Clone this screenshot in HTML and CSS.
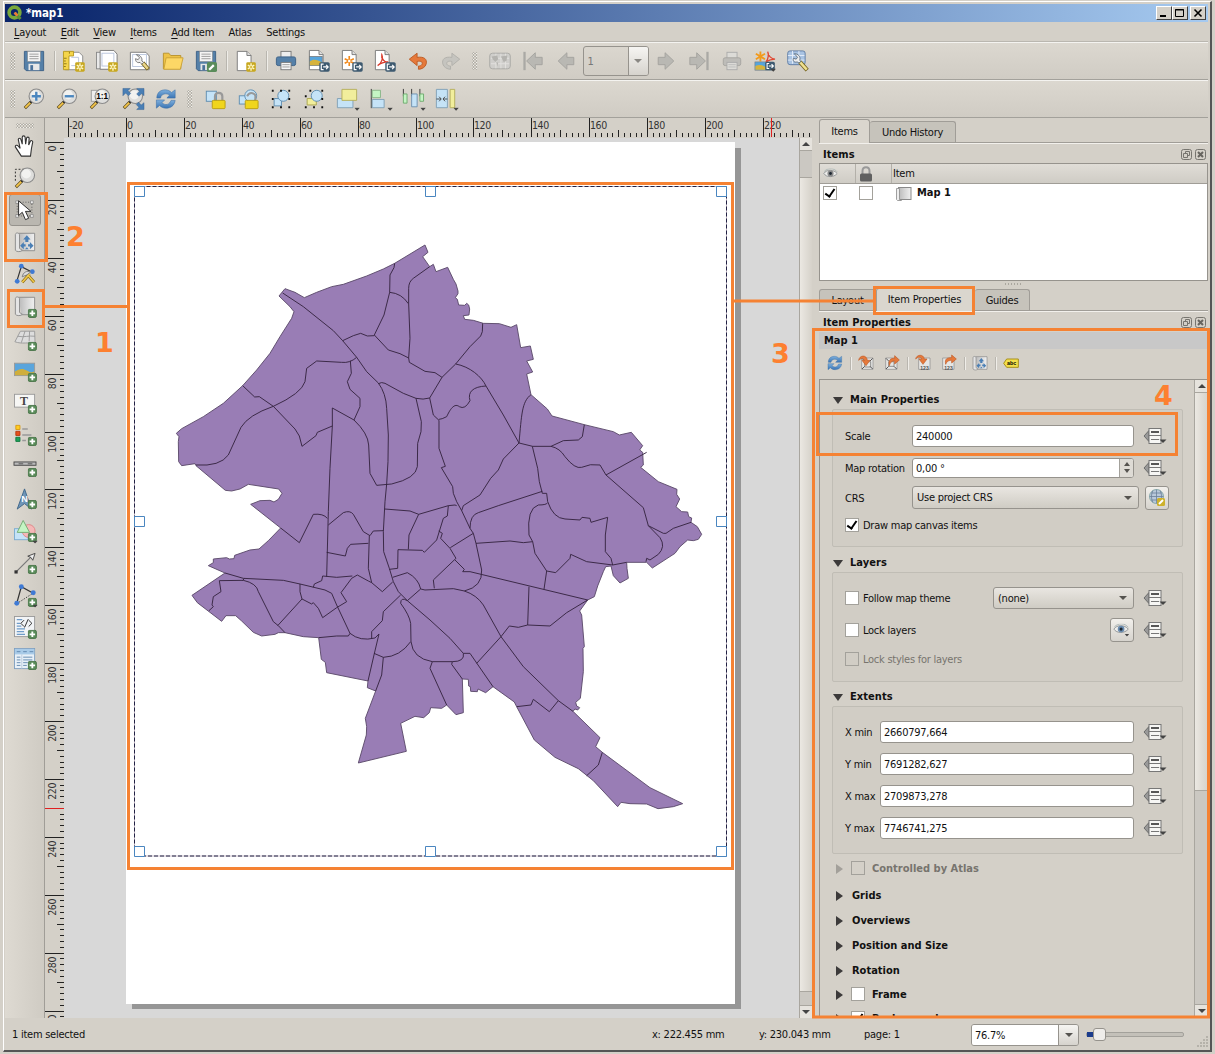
FILE: index.html
```html
<!DOCTYPE html>
<html lang="en">
<head>
<meta charset="utf-8">
<title>*map1</title>
<link rel="stylesheet" href="styles.css">
</head>
<body>
<svg class="defs" width="0" height="0">
  <defs>
    <linearGradient id="gPaper" x1="0" x2="1"><stop offset="0" stop-color="#b9b9b9"/><stop offset=".5" stop-color="#d6d6d6"/><stop offset="1" stop-color="#f0f0f0"/></linearGradient>
    <linearGradient id="gBlue" x1="0" y1="0" x2="0" y2="1"><stop offset="0" stop-color="#7fb0dd"/><stop offset="1" stop-color="#3a74b4"/></linearGradient>
    <symbol id="plus" viewBox="0 0 10 10"><rect x=".5" y=".5" width="9" height="9" rx="1.8" fill="#5a8c5a" stroke="#477347"/><path d="M5 2v6M2 5h6" stroke="#fff" stroke-width="2"/></symbol>
    <symbol id="star" viewBox="0 0 11 11"><rect x=".3" y=".3" width="10.4" height="10.4" rx="1.5" fill="#c8a820"/><path d="M5.5 1.5v8M2 3.5l7 4M9 3.5l-7 4" stroke="#fff8c8" stroke-width="1.5"/><circle cx="5.5" cy="5.5" r="1" fill="#c8a820"/></symbol>
    <symbol id="export" viewBox="0 0 12 11"><rect x=".3" y=".3" width="11.4" height="10.4" rx="1.8" fill="#3e5a70"/><path d="M5 2.5H2.5v6H5M4.5 5.5H10M7.8 3.2L10 5.5 7.8 7.8" fill="none" stroke="#fff" stroke-width="1.3"/></symbol>
    <symbol id="lens" viewBox="0 0 24 24"><path d="M8.5 15.5L2 22" stroke="#5a4a20" stroke-width="3.4"/><path d="M8 16l-5.5 5.5" stroke="#f5c64a" stroke-width="2"/><path d="M10 14l-2 2" stroke="#222" stroke-width="2.6"/><circle cx="14.5" cy="9" r="7.900" fill="#dededc" stroke="#8b8b8b" stroke-width="1.2"/><circle cx="13.500" cy="7.500" r="5" fill="#f2f2f0"/></symbol>
    <symbol id="sheet" viewBox="0 0 24 24"><path d="M4.500 1.500h10.500l4.500 4.500v16.500h-15z" fill="#fff" stroke="#777"/><path d="M15 1.500v4.500h4.500" fill="#ddd" stroke="#777"/></symbol>
    <symbol id="refresh" viewBox="0 0 24 24"><path d="M2 11C2 5 6 2 11 2c3 0 5 1 7 3l4-3v9h-9l3-3.500C12 5.500 7 6 6 11z" fill="url(#gBlue)" stroke="#3a6ea5" stroke-width=".6"/><path d="M22 13.500c-1 6-5 8.500-10 8.500-3 0-5-1-7-3l-3.500 3v-9h9l-3 3c4 3.500 8 2.500 10-2.500z" fill="url(#gBlue)" stroke="#3a6ea5" stroke-width=".6"/></symbol>
    <symbol id="disk" viewBox="0 0 24 24"><path d="M1.500 1.500h21v21h-19l-2-2z" fill="#5580a8" stroke="#3b5f85"/><rect x="5" y="1.500" width="14" height="11" fill="#f4f4f4" stroke="#888" stroke-width=".6"/><path d="M7 4.500h10M7 7h10M7 9.500h10" stroke="#999"/><rect x="6" y="15" width="12" height="7" fill="#e8e8e8"/><rect x="8" y="16.500" width="3" height="5.500" fill="#4b729b"/></symbol>
    <symbol id="eye" viewBox="0 0 18 12"><path d="M1 6C4 1 13 1 17 6 13 11 4 11 1 6z" fill="#eeeeec" stroke="#8b8f92"/><circle cx="9" cy="6" r="3.700" fill="var(--iris,#6a8cb0)"/><circle cx="9" cy="6" r="1.700" fill="#1d2732"/><path d="M1.500 3.500C6-1 13-1 17 4" fill="none" stroke="#9aa" stroke-width=".8"/></symbol>
    <symbol id="drop" viewBox="0 0 6 4"><path d="M0 .5h6L3 3.700z" fill="#444"/></symbol>
    <symbol id="override" viewBox="0 0 24 18"><path d="M6 3.500L1 9l5 5.500z" fill="#999" stroke="#6d6d6d"/><rect x="6" y="1.500" width="12" height="15" fill="#f6f6f4" stroke="#777"/><path d="M8 5h8" stroke="#444" stroke-width="1.800"/><path d="M6 8.500h12M8 12.500h8" stroke="#777"/><path d="M16.500 12.500h7L20 16z" fill="#444"/></symbol>
    <symbol id="roll" viewBox="0 0 24 24"><path d="M5 2.500h17.500v19H8" fill="url(#gPaper)" stroke="#8a8a8a"/><path d="M1.500 4c0-2.500 4-2.500 4.500 0v15l3 2c-1 2-6.500 2-7.500 0z" fill="#e4e4e4" stroke="#8a8a8a"/></symbol>
    <symbol id="arrow" viewBox="0 0 24 24"><path d="M3.500 12L13 3v5h7.500v8H13v5z" fill="#b9b8b3" stroke="#a3a29e"/></symbol>
    <symbol id="fourway" viewBox="0 0 24 24"><path d="M12 1l6 7h-3.500v4h-5V8H6zM1 18l6-6v3.500l3 0v4H7V24zM23 18l-6-6v3.500l-3 0v4h3V24zM9 24l3-3.500 3 3.500z" fill="#4a7fb5"/></symbol>
    <symbol id="restore" viewBox="0 0 11 11"><rect x=".5" y=".5" width="10" height="10" rx="2" fill="none" stroke="#77756f"/><path d="M4.500 4.500v-2h4v4h-2M2.500 4.500h4v4h-4z" fill="none" stroke="#77756f"/></symbol>
    <symbol id="close" viewBox="0 0 11 11"><rect x=".5" y=".5" width="10" height="10" rx="2" fill="none" stroke="#77756f"/><path d="M3 3l5 5M8 3l-5 5" stroke="#66645f" stroke-width="2"/></symbol>
  </defs>
</svg>

<div class="window">
  <header class="titlebar">
    <svg class="logo" viewBox="0 0 16 16"><circle cx="7.500" cy="7.500" r="5.400" fill="none" stroke="#79a83c" stroke-width="3.600"/><path d="M8 8l5.500 6" stroke="#5f9136" stroke-width="3"/><path d="M7.500 7.500l3 3.200" stroke="#ee7a3a" stroke-width="2.500"/></svg>
    <span class="title">*map1</span>
    <div class="winbtns">
      <b><svg viewBox="0 0 14 12"><path d="M3 9h6" stroke="#000" stroke-width="2"/></svg></b><b><svg viewBox="0 0 14 12"><path d="M2.500 2.500h8v7h-8zM2 3h9" fill="none" stroke="#000"/></svg></b><b class="gap"><svg viewBox="0 0 14 12"><path d="M3.500 2.500l7 7M10.500 2.500l-7 7" stroke="#000" stroke-width="1.600"/></svg></b>
    </div>
  </header>
  <nav class="menu">
    <span><u>L</u>ayout</span><span><u>E</u>dit</span><span><u>V</u>iew</span><span><u>I</u>tems</span><span><u>A</u>dd Item</span><span>Atlas</span><span>Settings</span>
  </nav>

  <div class="toolbar">
    <i class="grip"></i>
    <svg class="ic" viewBox="0 0 24 24"><use href="#disk"/></svg>
    <i class="sep"></i>
    <svg class="ic" viewBox="0 0 24 24"><path d="M2.500 2.500h15l4 4v15h-19z" fill="#fff" stroke="#888"/><path d="M9 8h8v9H9" fill="none" stroke="#b8c4dc"/><path d="M.5 1.500h11v5h-5v15h-6z" fill="#f5d54a" stroke="#b8981c"/><path d="M1 9h3M1 12h2M1 15h3M1 18h2M7 2v2" stroke="#8b7418"/><use href="#star" x="13" y="13" width="11" height="11"/></svg>
    <svg class="ic" viewBox="0 0 24 24"><rect x=".5" y="2.500" width="16" height="18" fill="#e9e9e9" stroke="#888"/><path d="M4.500.5h15l3.500 4v16.500H4.500z" fill="#fff" stroke="#777"/><rect x="6.500" y="3.500" width="13" height="14" fill="none" stroke="#b8c4dc"/><use href="#star" x="13" y="13" width="11" height="11"/></svg>
    <svg class="ic" viewBox="0 0 24 24"><path d="M1.500 2.500h17l3.500 4v15H1.500z" fill="#fff" stroke="#777"/><rect x="4" y="5" width="15" height="13" fill="none" stroke="#b8c4dc"/><path d="M15 14l6 7" stroke="#6f5c16" stroke-width="4.500"/><path d="M15 14l5.500 6.500" stroke="#ead68a" stroke-width="2.800"/><path d="M8 5c4 0 7 4 6 7l2 1.500-2 2-2-2c-3 1-5-1-5-4l3 1 1.500-2z" fill="#eee" stroke="#666" stroke-width=".9"/></svg>
    <svg class="ic" viewBox="0 0 24 24"><path d="M1.500 20.500v-17h6l2 2.500h11v14.500z" fill="#eec246" stroke="#b8922c"/><path d="M4.500 8.500h18.500l-3 12.500H2z" fill="#fcd766" stroke="#c9a136"/></svg>
    <svg class="ic" viewBox="0 0 24 24"><use href="#disk"/><rect x="13" y="13" width="11" height="11" rx="2" fill="#5a8c5a"/><path d="M15.500 21.500l5-5" stroke="#fff" stroke-width="2.500"/></svg>
    <i class="sep"></i>
    <svg class="ic" viewBox="0 0 24 24"><use href="#sheet" x="-2"/><use href="#star" x="12" y="13" width="11" height="11"/></svg>
    <i class="sep"></i>
    <svg class="ic" viewBox="0 0 24 24"><rect x="6.500" y="1.500" width="11" height="7" fill="#eee" stroke="#777"/><rect x="1.500" y="7.500" width="21" height="9.500" rx="2" fill="#5580a8" stroke="#3b5f85"/><rect x="6.500" y="13.500" width="11" height="8" fill="#f8f8f8" stroke="#777"/><path d="M8 16h8M8 18.500h8" stroke="#999"/></svg>
    <svg class="ic" viewBox="0 0 24 24"><use href="#sheet" x="-3" y="-1"/><rect x="1.500" y="7" width="14" height="10" fill="#56a4dc" stroke="#777" stroke-width=".8"/><path d="M2 16.500v-4c4-3 8-2 13 1v3z" fill="#d6b33c"/><use href="#export" x="12" y="13" width="12" height="11"/></svg>
    <svg class="ic" viewBox="0 0 24 24"><use href="#sheet" x="-3" y="-1"/><path d="M9 6.500v11M4 9.500l10 5M14 9.500l-10 5" stroke="#f28a1c" stroke-width="1.800"/><circle cx="9" cy="12" r="1.400" fill="#fff"/><use href="#export" x="12" y="13" width="12" height="11"/></svg>
    <svg class="ic" viewBox="0 0 24 24"><use href="#sheet" x="-3" y="-1"/><path d="M4 17c5-3 6-9 4.500-12-1 4 3 9 7 8-4 0-8 1-11.500 4z" fill="none" stroke="#d93a2b" stroke-width="1.400"/><use href="#export" x="12" y="13" width="12" height="11"/></svg>
    <svg class="ic" viewBox="0 0 24 24"><path d="M2.500 10L11 3.500V8c8-1 11 2 10 7-1 4-5 6-8.500 6v-3.500c4 0 5-3 3.500-4.500-1-1-3-1-5-.5v4.500z" fill="#e5793b" stroke="#bb5a22"/></svg>
    <svg class="ic" viewBox="0 0 24 24"><path d="M21.500 10L13 3.500V8c-8-1-11 2-10 7 1 4 5 6 8.500 6v-3.500c-4 0-5-3-3.500-4.500 1-1 3-1 5-.5v4.500z" fill="#c5c4bf" stroke="#b0afaa"/></svg>
    <i class="grip mid"></i>
    <svg class="ic" viewBox="0 0 24 24"><rect x=".8" y="3.500" width="22.400" height="17" rx="3" fill="#cfcecb" stroke="#a9a8a4"/><path d="M2 9h20M2 15h20M7.500 4v16M13 4v16M18 4v16" stroke="#e2e1de"/><path d="M3 7l6-1 1 4-3 3-3-3zM13 7l7-1-1 6-3 1zM8 13l2 1-1 4z" fill="#b4b3af"/></svg>
    <svg class="ic" viewBox="0 0 24 24"><rect x="1.500" y="2" width="2.500" height="20" fill="#aaa9a5"/><use href="#arrow" x="1.500"/></svg>
    <svg class="ic" viewBox="0 0 24 24"><use href="#arrow"/></svg>
    <div class="pagebox"><span>1</span><em></em></div>
    <svg class="ic" viewBox="0 0 24 24"><use href="#arrow" transform="matrix(-1 0 0 1 24 0)"/></svg>
    <svg class="ic" viewBox="0 0 24 24"><rect x="20" y="2" width="2.500" height="20" fill="#aaa9a5"/><use href="#arrow" transform="matrix(-1 0 0 1 22.500 0)"/></svg>
    <svg class="ic" viewBox="0 0 24 24"><rect x="6.500" y="2.500" width="11" height="7" fill="#dcdbd7" stroke="#aaa"/><rect x="2.500" y="8.500" width="19" height="8.500" rx="2" fill="#bdbcb8" stroke="#a5a4a0"/><rect x="6.500" y="13.500" width="11" height="8" fill="#dcdbd7" stroke="#aaa"/><path d="M8 16h8M8 18.500h8" stroke="#bbb"/></svg>
    <svg class="ic" viewBox="0 0 24 24"><path d="M7 1.500v11M2 4l10 6M12 4L2 10" stroke="#f29a1c" stroke-width="2"/><path d="M13 13c3-3 3-9 2-11 0 4 4 8 8 8-4 0-7 1-10 3z" fill="none" stroke="#e04a35" stroke-width="1.500"/><rect x="1" y="13" width="12" height="9" fill="#56a4dc" stroke="#777" stroke-width=".6"/><path d="M1.500 21.500v-4c4-2 8-1 11 1v3z" fill="#d6b33c"/><use href="#export" x="12" y="12" width="11" height="11"/><use href="#drop" x="18" y="20" width="6" height="4"/></svg>
    <svg class="ic" viewBox="0 0 24 24"><rect x=".8" y="1" width="19" height="15" rx="2.500" fill="#a9c3e2" stroke="#5d7ba3"/><path d="M1 6h18M1 11h18M6 1v14M13 1v14" stroke="#e6eef8"/><path d="M14 13l8 9" stroke="#6f5c16" stroke-width="4.500"/><path d="M14 13l7.500 8.500" stroke="#efe08e" stroke-width="2.800"/><path d="M8 4c4 0 7 3 6 7l1 2-2 1-2-1c-3 1-5-1-4-4l3 1 1.500-2z" fill="#eee" stroke="#567" stroke-width=".9"/></svg>
  </div>

  <div class="toolbar second">
    <i class="grip"></i>
    <svg class="ic" viewBox="0 0 24 24"><use href="#lens"/><path d="M14.500 4v10M9.500 9h10" stroke="#4a86bf" stroke-width="2.600"/></svg>
    <svg class="ic" viewBox="0 0 24 24"><use href="#lens"/><path d="M9.500 9h10" stroke="#4a86bf" stroke-width="2.600"/></svg>
    <svg class="ic" viewBox="0 0 24 24"><rect x="2.500" y="2.500" width="10" height="12" fill="#eee" stroke="#999"/><use href="#lens"/><text x="7.800" y="12.500" class="t11">1:1</text></svg>
    <svg class="ic" viewBox="0 0 24 24"><use href="#lens"/><path d="M1 .5h8L6.500 3l3 3-2.500 2.500-3-3L1 8.500zM24 .5v8l-2.500-2.500-3 3-2.500-2.500 3-3L16 .5zM24 23.500h-8l2.500-2.500-3-3 2.500-2.500 3 3 3-2.500z" fill="#4a7fb5" stroke="#355f8c" stroke-width=".5"/></svg>
    <svg class="ic" viewBox="0 0 24 24"><use href="#refresh"/></svg>
    <i class="grip mid"></i>
    <svg class="ic" viewBox="0 0 24 24"><rect x="2.500" y="3.500" width="11" height="11" fill="#c5e3f7" stroke="#5d8cb0"/><path d="M12 14V9c0-5 8-5 8 0v5" fill="none" stroke="#999" stroke-width="2.400"/><rect x="9" y="13.500" width="14" height="9" rx="1" fill="#f0d51c" stroke="#b89c10"/></svg>
    <svg class="ic" viewBox="0 0 24 24"><rect x="2.500" y="8.500" width="9" height="9" fill="#c5e3f7" stroke="#5d8cb0"/><circle cx="15" cy="8.500" r="6.500" fill="#c5e3f7" stroke="#5d8cb0"/><path d="M11 9c3-6 10-3 9 1v4" fill="none" stroke="#999" stroke-width="2.200"/><rect x="9" y="13.500" width="14" height="9" rx="1" fill="#f0d51c" stroke="#b89c10"/></svg>
    <svg class="ic" viewBox="0 0 24 24"><path d="M4.500 11.500h8v8h-8z" fill="#c5e3f7" stroke="#5d8cb0"/><circle cx="14.500" cy="8.500" r="6" fill="#c5e3f7" stroke="#5d8cb0"/><path d="M2 2h2v2H2zM11 2h2v2h-2zM20 2h2v2h-2zM2 11h2v2H2zM20 11h2v2h-2zM2 20h2v2H2zM11 20h2v2h-2zM20 20h2v2h-2z" fill="#111"/></svg>
    <svg class="ic" viewBox="0 0 24 24"><path d="M4.500 11.500h10v7h-10z" fill="#f1ee9c" stroke="#a8a44a"/><circle cx="15" cy="8.500" r="6" fill="#c5e3f7" stroke="#5d8cb0"/><path d="M7 2h2v2H7zM20 2h2v2h-2zM2 8h2v2H2zM20 11h2v2h-2zM2 20h2v2H2zM11 20h2v2h-2zM20 20h2v2h-2z" fill="#111"/></svg>
    <svg class="ic" viewBox="0 0 24 24"><path d="M1.500 11.500h17v10h-17z" fill="#c5e3f7" stroke="#7f9fb5"/><path d="M6.500 1.500h16v12h-16z" fill="#f1ee9c" stroke="#b3ae5a"/><use href="#drop" x="20" y="21" width="6" height="4"/></svg>
    <svg class="ic" viewBox="0 0 24 24"><path d="M2.500 1v21" stroke="#333"/><path d="M3.500 2.500h9v8h-9z" fill="#c4f5c4" stroke="#86b486"/><path d="M3.500 12.500h13v9h-13z" fill="#c5e3f7" stroke="#7f9fb5"/><use href="#drop" x="20" y="21" width="6" height="4"/></svg>
    <svg class="ic" viewBox="0 0 24 24"><path d="M1.500 1v8M10.500 1v8M19.500 1v8" stroke="#333"/><path d="M1.500 6.500h4v10h-4zM19.500 6.500h4v8h-4z" fill="#c4f5c4" stroke="#6da86d"/><path d="M10.500 6.500h6v14h-6z" fill="#c5e3f7" stroke="#6d8fae"/><use href="#drop" x="20" y="21" width="6" height="4"/></svg>
    <svg class="ic" viewBox="0 0 24 24"><path d="M1.500 1.500h12v20h-12z" fill="#c5e3f7" stroke="#7f9fb5"/><path d="M16.500 1.500h5v20h-5z" fill="#f1ee9c" stroke="#b3ae5a"/><path d="M1.500 12H6.500M4.500 9.500L6.800 12 4.500 14.500M13.500 12H9M11 9.500L8.700 12l2.300 2.500" fill="none" stroke="#444"/><use href="#drop" x="20" y="21" width="6" height="4"/></svg>
  </div>

  <main class="main">
    <aside class="toolbox">
      <i class="hgrip"></i>
      <svg class="ic" viewBox="0 0 24 24"><path d="M8 23l-6.500-10c-.5-2 2-2.500 3.500-.5l1.700 2L4.700 5c0-2 2.400-2 2.900 0L9 10V2.500c0-2 2.900-2 3.100 0l.6 7.500 1-6.500c.3-1.700 2.800-1.500 2.800.3L16 11l1.700-4c.8-1.700 2.900-.8 2.700.8L19 15l-1 8z" fill="#fff" stroke="#333" stroke-width="1.200"/></svg>
      <svg class="ic" viewBox="0 0 24 24"><path d="M1.500 15V2.500H12" fill="none" stroke="#222" stroke-dasharray="2 2"/><use href="#lens"/></svg>
      <span class="cell on"><svg class="ic" viewBox="0 0 24 24"><rect x="3.500" y="3.500" width="16" height="15" fill="none" stroke="#555" stroke-dasharray="1 2"/><path d="M2 2h3v3H2zM18 2h3v3h-3zM2 17h3v3H2zM18 17h3v3h-3z" fill="#eee" stroke="#777" stroke-width=".7"/><path d="M5 2v16l4-3.500 3.500 8 3.500-1.500-3.500-7.500h6z" fill="#fff" stroke="#222"/></svg></span>
      <svg class="ic" viewBox="0 0 24 24"><use href="#roll"/><use href="#fourway" x="6" y="3" width="16" height="18"/></svg>
      <svg class="ic" viewBox="0 0 24 24"><path d="M3 20L8 4l12 6" fill="none" stroke="#333" stroke-width="1.300"/><circle cx="3.500" cy="20" r="2.600" fill="#3f7ad4"/><circle cx="8" cy="3.500" r="2.600" fill="#3f7ad4"/><circle cx="20" cy="9.500" r="2.600" fill="#3f7ad4"/><path d="M9 21l8-9M14 12l8 9" stroke="#8c6a14" stroke-width="3.200"/><path d="M9 21l8-9M14 12l8 9" stroke="#f0ca4a" stroke-width="1.800"/><path d="M9 15c1-5 5-7 9-5l-4 3z" fill="#ddd" stroke="#777"/></svg>
      <svg class="ic" viewBox="0 0 24 24"><use href="#roll"/><use href="#plus" x="15" y="15" width="10" height="10"/></svg>
      <svg class="ic" viewBox="0 0 24 24"><path d="M7 3.500h15.500L23 17c-7-2-14 1-22-2z" fill="#ddd" stroke="#999"/><path d="M4 9c7 1.500 12-1 19 0M12 3.500L8 16M17 3.500l-.5 11" stroke="#999" fill="none"/><use href="#plus" x="15" y="15" width="10" height="10"/></svg>
      <svg class="ic" viewBox="0 0 24 24"><rect x=".5" y="3.500" width="22" height="13.500" fill="#5aa5dc" stroke="#999"/><path d="M1 16.500v-4c5-3 8-4 13-1s5 2 8 1v4z" fill="#cfae3c"/><use href="#plus" x="15" y="14" width="10" height="10"/></svg>
      <svg class="ic" viewBox="0 0 24 24"><rect x=".5" y="2.500" width="22" height="14" fill="#f6f6f4" stroke="#999"/><text class="tT" x="6.500" y="14">T</text><use href="#plus" x="15" y="14" width="10" height="10"/></svg>
      <svg class="ic" viewBox="0 0 24 24"><path d="M2 1.500h4.500V6H2z" fill="#fc2" stroke="#d99a10"/><path d="M2 8h4.500v4.500H2z" fill="#e8501c" stroke="#b53a10"/><path d="M2 14.500h4.500V19H2z" fill="#1ca05a" stroke="#107a40"/><path d="M9 5.500h6M9 12h10M9 18h4" stroke="#999" stroke-width="1.800"/><use href="#plus" x="15" y="14" width="10" height="10"/></svg>
      <svg class="ic" viewBox="0 0 24 24"><rect x="0" y="6.500" width="24" height="3.600" fill="#bbb" stroke="#444"/><path d="M5 8.300h5M15 8.300h5" stroke="#777" stroke-width="2"/><use href="#plus" x="15" y="13" width="10" height="10"/></svg>
      <svg class="ic" viewBox="0 0 24 24"><path d="M11.500 1L19 23l-7.500-6L3.500 23z" fill="#6f96b8" stroke="#3d6488"/><text class="tN" x="7.800" y="15.500">N</text><use href="#plus" x="15" y="13" width="10" height="10"/></svg>
      <svg class="ic" viewBox="0 0 24 24"><rect x=".5" y="9.500" width="15" height="12" fill="#c5e3f7" stroke="#7aaad0"/><circle cx="16" cy="12" r="7" fill="#f5b8b8" stroke="#dd8585"/><path d="M10 .5L17 13.500H3.500z" fill="#c4f5c4" stroke="#70a870"/><use href="#plus" x="15" y="14" width="10" height="10"/><use href="#drop" x="20" y="22" width="6" height="4"/></svg>
      <svg class="ic" viewBox="0 0 24 24"><path d="M2 22L20 4" stroke="#777" stroke-width="1.300"/><rect x=".5" y="20" width="3.500" height="3.500" fill="#333"/><path d="M23 1.500l-2.500 7.500-2-3-3.500-1.500z" fill="#eee" stroke="#444"/><use href="#plus" x="15" y="14" width="10" height="10"/></svg>
      <svg class="ic" viewBox="0 0 24 24"><path d="M3 21L8 3l13 7" fill="none" stroke="#333" stroke-width="1.300"/><path d="M3 21.500l17-11" stroke="#333" stroke-dasharray="1.500 1.500"/><circle cx="3" cy="21" r="2.700" fill="#3f7ad4"/><circle cx="8" cy="3" r="2.700" fill="#3f7ad4"/><circle cx="21" cy="9.500" r="2.700" fill="#3f7ad4"/><use href="#plus" x="15" y="15" width="10" height="10"/><use href="#drop" x="20" y="22" width="6" height="4"/></svg>
      <svg class="ic" viewBox="0 0 24 24"><rect x=".5" y=".5" width="22" height="22" fill="#f2f4f6" stroke="#999"/><path d="M3 4h6M3 8h4M3 11h5M3 14h9M3 17h8M3 20h9" stroke="#6f9cc9" stroke-width="1.500"/><path d="M11 4.500L7.500 8 11 11.500M15.500 3.500l-4 9M16 4.500L19.500 8 16 11.500" fill="none" stroke="#222"/><use href="#plus" x="15" y="15" width="10" height="10"/></svg>
      <svg class="ic" viewBox="0 0 24 24"><rect x=".5" y=".5" width="22" height="22" fill="#e9f1f8" stroke="#7f9fbf"/><path d="M1 1h21v6H1z" fill="#a9cbe8"/><path d="M3 4h4M10 4h4M17 4h4M3 10h4M10 10h10M3 13h4M10 13h10M3 16h4M10 16h5M3 19h4M10 19h4" stroke="#5f87ae"/><path d="M8.500 7v15.500" stroke="#bcd"/><use href="#plus" x="15" y="14" width="10" height="10"/></svg>
    </aside>

    <section class="view">
      <svg class="hruler" id="hruler" width="767" height="20"></svg>
      <div class="viewrow">
        <svg class="vruler" id="vruler" width="19" height="880"></svg>
        <svg class="canvas" width="735" height="880" viewBox="64 138 735 880">
          <rect x="132" y="148" width="609" height="861" fill="#969696"/>
          <rect x="126" y="142" width="609" height="862" fill="#fff"/>
          <g transform="translate(170 235) scale(.33333)" stroke-linejoin="round">
            <path class="land" d="M765 30L774 52 758 65 779 95 790 88 798 110 833 97 850 133 858 147 864 168 864 176 856 188 862 193 866 210 884 211 890 205 896 210 899 222 897 240 880 242 884 253 910 256 940 265 988 266 1023 277 1040 269 1052 338 1081 333 1090 373 1070 378 1088 411 1070 417 1083 479 1132 522 1146 543 1243 569 1330 590 1348 600 1384 592 1418 632 1409 645 1418 652 1420 690 1412 697 1465 740 1521 763 1520 778 1529 792 1518 815 1535 830 1553 831 1556 845 1565 849 1563 862 1582 875 1595 898 1585 913 1570 917 1553 915 1530 935 1515 955 1447 999 1430 982 1370 982 1371 1000 1375 1030 1350 1044 1330 1022 1323 993 1307 995 1300 1010 1283 1053 1273 1085 1253 1095 1229 1128 1235 1140 1243 1235 1239 1240 1240 1310 1231 1390 1217 1402 1220 1413 1229 1418 1223 1425 1215 1422 1209 1429 1290 1508 1277 1535 1297 1552 1440 1658 1538 1706 1510 1715 1464 1721 1430 1707 1380 1706 1353 1702 1343 1715 1270 1637 1225 1601 1155 1567 1093 1515 1040 1415 1033 1401 969 1355 947 1373 924 1362 922 1370 902 1369 901 1355 896 1353 895 1333 877 1332 880 1433 858 1439 830 1410 815 1420 782 1418 778 1433 761 1448 735 1444 692 1465 709 1549 565 1584 589 1500 590 1475 586 1450 617 1368 592 1358 594 1338 470 1313 466 1282 454 1273 446 1208 400 1205 345 1193 325 1193 315 1198 275 1203 250 1192 215 1158 197 1142 168 1142 155 1159 82 1103 66 1081 165 1014 115 992 130 983 130 972 170 968 178 972 192 971 194 961 240 945 267 942 295 917 332 879 242 808 270 797 300 796 312 801 325 793 336 775 326 762 300 758 235 748 210 762 185 768 166 766 78 692 75 686 35 692 26 680 25 620 27 605 19 595 35 581 100 545 160 505 218 452 260 405 300 355 330 305 365 250 372 230 360 215 327 183 345 161 375 172 403 188 440 172 485 155 520 148 590 123 640 102 674 85z"/>
            <g class="lines">
              <path d="M338 174L400 215 490 287 518 317 560 367 590 410 625 444Q648 475 650 520L655 600 654 680 650 747 645 800 640 890 641 950 658 1000 670 1040 685 1070 712 1097 780 1155 840 1210 880 1255"/>
              <path d="M674 85L672 98 660 120 659 172 642 240 613 300 655 345 690 356 716 369M659 172Q695 175 715 206M779 95L730 130Q716 140 716 160L716 206 720 310 716 369 718 382 765 409 795 413 816 427M518 317L550 302 572 295 592 303 613 302M816 427L779 489Q760 495 738 490L700 475 645 445Q635 440 625 446M816 427L857 387 900 335 932 303 937 290 938 265"/>
              <path d="M857 387C900 395 935 425 948 453L1000 540 1047 624M948 453C910 455 892 470 900 497Q885 525 868 515C850 500 835 535 830 545Q815 553 807 553M779 489L790 540 807 556 807 640 826 694 814 698 848 755 850 775 860 800 875 827 900 880 910 895 918 925 935 1005Q938 1055 883 1068"/>
              <path d="M738 490L754 560 753 590 743 625 742 695Q738 730 665 747L620 751 600 715 596 630Q594 595 552 555L487 519 487 573 480 700 475 830 470 1025M541 377L544 415 532 440 540 463 570 490 570 515 552 555M560 367Q540 385 515 382L440 378 410 400 405 440Q395 475 310 514 235 540 213 577L175 660Q150 695 78 690M218 452L254 486 268 485 310 514 375 582 388 603 396 634 438 602 442 592 487 573"/>
              <path d="M1083 479C1055 500 1055 540 1047 624L1088 634 1143 634Q1170 640 1185 665 1215 703 1235 697 1260 685 1290 690L1308 720 1420 818 1435 872 1470 908Q1488 935 1465 958L1440 975 1430 970 1428 980M1143 634L1180 617 1225 615 1237 605 1243 569M1308 720L1430 652M1435 872L1480 895 1488 895 1510 880 1563 862"/>
              <path d="M1047 624L1000 672 985 705 962 730 930 780 880 812 875 827M1087 634L1103 700 1108 740 1117 775 1130 775 1133 800Q1150 850 1185 852L1230 855 1236 847 1260 850 1263 862 1313 847 1306 900 1306 950 1323 970 1328 990M1117 769L985 812 925 833Q900 840 900 880M1133 803Q1130 810 1105 810 1070 820 1077 900L1088 920 1095 955 1130 1008 1122 1063M918 925L1020 918 1060 923 1088 920M1130 1008L1157 1013 1200 970 1202 958 1250 980 1328 990 1370 982"/>
              <path d="M855 975L883 1003 878 1010 900 1010 1253 1095M1077 1055L1073 1170M1253 1095L1190 1133 1140 1173 1073 1170 1045 1177 1018 1173 993 1205 920 1285M883 1068Q920 1080 940 1110L993 1205 1060 1295 1165 1397 1209 1429M1165 1397L1138 1430 1090 1393 1083 1410 1040 1415M1297 1552L1285 1590 1250 1622M880 1255L900 1255 969 1355M880 1255Q885 1280 847 1280L787 1280Q728 1270 723 1220L722 1165Q718 1140 692 1105 692 1085 712 1097M787 1280L780 1300 830 1410M847 1280L845 1288 877 1332"/>
              <path d="M332 879L388 923 430 838Q460 835 472 850M475 870L520 833Q540 825 550 838L580 890 600 902 610 888 640 887M598 902L595 1000 605 1043 637 1070 668 1041M470 952L526 963 532 940 542 928 595 925M644 822L720 828 746 838 835 812 855 810 860 812M746 838L717 900 715 943M835 812L832 843 820 850 800 915 763 952 757 946 684 944 683 1000 658 1003M806 888L817 895 812 910 840 940 858 970 790 1035 793 1060M841 938L910 895M668 1027L712 1013Q745 1030 752 1062L712 1097M752 1062L765 1065 850 1061 883 1068"/>
              <path d="M165 1014L220 1030 340 1036 390 1047 465 1065 485 1075 500 1110 540 1195Q570 1220 615 1209L627 1197 612 1260 594 1338M148 1037L220 1036Q260 1045 265 1070L310 1160 325 1172 345 1193M223 1030L218 1037M148 1037L153 1070 130 1085 126 1110 130 1115 117 1127M390 1047L390 1070 396 1092 323 1172M396 1092L425 1107 430 1103 445 1120 458 1148 500 1118 530 1100 513 1073 545 1030 562 1020 595 1038 605 1043M430 1057L433 1047 455 1037 458 1023 500 1027 547 1023M446 1208L500 1203 535 1203 540 1195M692 1080L640 1130 637 1157 605 1190 605 1210M612 1255L640 1267Q690 1265 722 1220M640 1267L635 1320 617 1368"/>
            </g>
          </g>
          <rect x="134.500" y="186.500" width="592" height="669.500" fill="none" stroke="#c8bcc8"/>
          <rect x="134.500" y="186.500" width="592" height="669.500" fill="none" stroke="#222244" stroke-dasharray="4 2"/>
          <g class="handles"><path d="M134.500 186.500h10v10h-10zM425.500 186.500h10v10h-10zM716.500 186.500h10v10h-10zM134.500 516.500h10v10h-10zM716.500 516.500h10v10h-10zM134.500 846.500h10v10h-10zM425.500 846.500h10v10h-10zM716.500 846.500h10v10h-10z"/></g>
        </svg>
        <div class="scroll"><i class="up"></i><i class="space1"></i><i class="thumb"></i><i class="space2"></i><i class="down"></i></div>
      </div>
    </section>

    <section class="side">
      <div class="tabs first"><span class="tab active t1">Items</span><span class="tab t2">Undo History</span></div>
      <div class="docktitle one">Items<span class="dockbtns"><svg><use href="#restore"/></svg><svg><use href="#close"/></svg></span></div>
      <div class="tree">
        <div class="thead"><span class="c1"><svg class="eyeg" viewBox="0 0 18 12"><use href="#eye"/></svg></span><span class="c1"><svg class="lockg" viewBox="0 0 14 16"><path d="M3.500 8V5c0-5 7-5 7 0v3" fill="none" stroke="#999" stroke-width="2"/><rect x="1" y="7.500" width="12" height="8" rx="1.500" fill="#606060"/></svg></span><span class="c3">Item</span></div>
        <div class="trow"><span class="c1"><i class="cb on"></i></span><span class="c1"><i class="cb"></i></span><span class="c3 item"><svg viewBox="0 0 16 14"><rect x="2.500" y=".5" width="12.500" height="12" fill="url(#gPaper)" stroke="#8a8a8a"/><path d="M.5 1.500h3v11l2 1H1.500l-1-1z" fill="#eee" stroke="#8a8a8a" stroke-width=".8"/></svg><b>Map 1</b></span></div>
      </div>
      <div class="split"><i></i></div>
      <div class="tabs lower"><span class="tab t3">Layout</span><span class="tab active t4">Item Properties</span><span class="tab t5">Guides</span></div>
      <div class="docktitle two">Item Properties<span class="dockbtns"><svg><use href="#restore"/></svg><svg><use href="#close"/></svg></span></div>
      <div class="itemname">Map 1</div>
      <div class="minibar">
        <svg viewBox="0 0 24 24"><use href="#refresh"/></svg><i></i>
        <svg viewBox="0 0 24 24"><path d="M5.500 4.500h17v17h-17z" fill="#e6e6e4" stroke="#888"/><path d="M6 5l4 4M22 5l-4 4M6 21l4-4M22 21l-4-4" stroke="#555" stroke-width="1.500"/><path d="M10 10h9v8h-9z" fill="none" stroke="#666"/><path d="M1 8C2 0 13-1 14 8h4l-6 8-6-8h4C9 5 5 4 1 8z" fill="#e5793b" stroke="#c05c28"/></svg>
        <svg viewBox="0 0 24 24"><path d="M2.500 4.500h17v17h-17z" fill="#e6e6e4" stroke="#888"/><path d="M3 5l4 4M3 21l4-4M19 21l-4-4" stroke="#555" stroke-width="1.500"/><path d="M7 10h8v7H7z" fill="none" stroke="#666"/><path d="M8 16c-2-9 2-11 8-11V1l7 6.500-7 6V9c-4 0-6 1-8 7z" fill="#e5793b" stroke="#c05c28"/></svg><i></i>
        <svg viewBox="0 0 24 24"><path d="M5.500 4.500h17v17h-17z" fill="#e6e6e4" stroke="#888"/><text class="tD" x="8" y="22">123</text><path d="M1 6C2-1 13-2 14 6h4l-6 8-6-8h4C9 3 5 2 1 6z" fill="#e5793b" stroke="#c05c28"/></svg>
        <svg viewBox="0 0 24 24"><path d="M2.500 4.500h17v17h-17z" fill="#e6e6e4" stroke="#888"/><text class="tD" x="5" y="22">123</text><path d="M7 14C5 5 10 4 16 4V0l7 6-7 6V8c-4 0-7 1-9 6z" fill="#e5793b" stroke="#c05c28"/></svg><i></i>
        <svg viewBox="0 0 24 24"><use href="#roll"/><use href="#fourway" x="6" y="3" width="16" height="18"/></svg><i></i>
        <svg viewBox="0 0 24 24"><path d="M1 12.500l4.500-6.500H23v12.500H5.500z" fill="#f4e04a" stroke="#a8901c" stroke-width="1.500"/><text class="tA" x="6" y="15.500">abc</text></svg>
      </div>
      <div class="props">
        <div class="pcontent">
          <h3 class="h1"><i class="tri"></i>Main Properties</h3>
          <div class="group g1">
            <div class="row r32"><label class="w80">Scale</label><div class="input">240000</div><svg class="ov"><use href="#override"/></svg></div>
            <div class="row r31"><label class="w80">Map rotation</label><div class="input spin">0,00 °<em><i></i><i></i></em></div><svg class="ov"><use href="#override"/></svg></div>
            <div class="row r29"><label class="w80">CRS</label><div class="combo crs">Use project CRS<em></em></div><div class="btn crsb"><svg viewBox="0 0 18 18"><circle cx="8.500" cy="7.500" r="7" fill="#b9c9da" stroke="#8aa"/><path d="M1.500 7.500h14M8.500.5v14M3 4h11M3 11h11M5 1.500c-2 4-2 8 0 12M12 1.500c2 4 2 8 0 12" fill="none" stroke="#6b8099" stroke-width=".8"/><rect x="9" y="9" width="8" height="8" rx="1.500" fill="#cdb12c"/><path d="M11 15l4-4" stroke="#fff" stroke-width="2"/></svg></div></div>
            <div class="row r26"><i class="cb on"></i><span class="cl">Draw map canvas items</span></div>
          </div>
          <h3 class="h2"><i class="tri"></i>Layers</h3>
          <div class="group g2">
            <div class="row r32"><i class="cb"></i><span class="cl grow">Follow map theme</span><div class="combo none">(none)<em></em></div><svg class="ov"><use href="#override"/></svg></div>
            <div class="row r32"><i class="cb"></i><span class="cl grow">Lock layers</span><div class="btn"><svg class="eyeb" viewBox="0 0 20 16"><use href="#eye" y="1" width="18" height="12"/><use href="#drop" x="13" y="12" width="5" height="3.500"/></svg></div><svg class="ov"><use href="#override"/></svg></div>
            <div class="row r26 off"><i class="cb"></i><span class="cl">Lock styles for layers</span></div>
          </div>
          <h3 class="h3"><i class="tri"></i>Extents</h3>
          <div class="group g3">
            <div class="row r32"><label>X min</label><div class="input">2660797,664</div><svg class="ov"><use href="#override"/></svg></div>
            <div class="row r32"><label>Y min</label><div class="input">7691282,627</div><svg class="ov"><use href="#override"/></svg></div>
            <div class="row r32"><label>X max</label><div class="input">2709873,278</div><svg class="ov"><use href="#override"/></svg></div>
            <div class="row r32"><label>Y max</label><div class="input">7746741,275</div><svg class="ov"><use href="#override"/></svg></div>
          </div>
          <div class="fold f1 off"><i class="rtri"></i><i class="cb"></i>Controlled by Atlas</div>
          <div class="fold"><i class="rtri"></i>Grids</div>
          <div class="fold"><i class="rtri"></i>Overviews</div>
          <div class="fold"><i class="rtri"></i>Position and Size</div>
          <div class="fold"><i class="rtri"></i>Rotation</div>
          <div class="fold f6"><i class="rtri"></i><i class="cb"></i>Frame</div>
          <div class="fold"><i class="rtri"></i><i class="cb on"></i>Background</div>
        </div>
        <div class="scroll pscroll"><i class="up"></i><i class="thumb"></i><i class="space2"></i><i class="down"></i></div>
      </div>
    </section>
  </main>

  <footer class="status">
    <span class="s1">1 item selected</span><span class="s2">x: 222.455 mm</span><span class="s3">y: 230.043 mm</span><span class="s4">page: 1</span>
    <div class="zoombox"><span>76.7%</span><em></em></div>
    <div class="slider"><i></i><b></b></div>
    <svg class="sizegrip" viewBox="0 0 12 12"><path d="M10 1h2M7 4h2M10 4h2M4 7h2M7 7h2M10 7h2M1 10h2M4 10h2M7 10h2M10 10h2" stroke="#aaa8a0" stroke-width="1.500"/></svg>
  </footer>
</div>

<svg class="notes" width="1215" height="1054">
  <g fill="none" stroke="#f58233" stroke-width="3">
    <rect x="128.500" y="183.500" width="604" height="685"/>
    <rect x="5.500" y="193.500" width="41" height="67"/>
    <rect x="8.500" y="290.500" width="35" height="36"/>
    <path d="M45 306.500h84M734 301h140"/>
    <rect x="874.500" y="287.500" width="99" height="26"/>
    <rect x="813.500" y="329.500" width="395" height="687.500"/>
    <rect x="817.500" y="413.500" width="359" height="41"/>
  </g>
  <g class="nums"><text x="95" y="352">1</text><text x="66" y="246">2</text><text x="771" y="363">3</text><text x="1154" y="405">4</text></g>
</svg>
<script src="rulers.js"></script>
</body>
</html>
```

FILE: styles.css
```css
* { box-sizing: border-box; }
body {
  margin: 0; width: 1215px; height: 1054px; overflow: hidden; position: relative;
  padding: 1px 3px 1px 3px;
  background: #d4d0c8;
  font: 11px "DejaVu Sans Condensed", "DejaVu Sans", sans-serif;
  font-stretch: condensed; letter-spacing: -.25px; color: #111;
}
i { font-style: normal; }
svg { flex: none; }
.defs { position: absolute; }

.window {
  width: 1209px; height: 1051px; padding: 2px 2px 0 1px;
  background: #d4d0c8; border: 1px solid #fff; border-right: 2px solid #555; border-bottom: 2px solid #555;
  display: flex; flex-direction: column;
}
.titlebar {
  height: 18px; flex: none; display: flex; align-items: center; color: #fff; font-weight: bold; letter-spacing: -.1px;
  background: linear-gradient(90deg, #0a246a, #0f2b70 6%, #a6caf0);
}
.logo { width: 16px; height: 16px; margin-left: 2px; }
.title { margin-left: 3px; font-size: 11.500px; flex: 1; }
.winbtns { display: flex; padding-right: 2px; }
.winbtns b { width: 16px; height: 14px; background: #d4d0c8; border: 1px solid; border-color: #fff #404040 #404040 #fff; display: flex; }
.winbtns .gap { margin-left: 2px; }
.winbtns svg { width: 14px; height: 12px; }

.menu { height: 19px; flex: none; display: flex; align-items: center; padding: 1px 0 0 9px; gap: 14.500px; }
.menu u { text-underline-offset: 2px; }

.toolbar {
  height: 39px; flex: none; display: flex; align-items: center;
  border-top: 1px solid #bab7b0; border-bottom: 1px solid #a3a19b; box-shadow: inset 0 1px #f4f3f0;
  background: linear-gradient(#dcd8d0, #d0ccc4);
}
.toolbar.second { height: 38px; border-top: 0; }
.toolbar .ic { width: 22px; height: 22px; margin: 0 5.5px; overflow: visible; }
.grip { width: 5px; height: 18px; margin-left: 5px; margin-right: 2px; background: radial-gradient(circle, #f4f3ef 0 .9px, #b5b2aa 1px 1.2px, transparent 1.3px) 0 0 / 3px 3px; }
.grip.mid { margin: 0 6px 0 5px; }
.sep { width: 1px; height: 20px; background: #b9b6af; margin: 0 2px 0 4px; box-shadow: 1px 0 #efede8; }
.t11 { font: bold 9px "Liberation Sans", sans-serif; letter-spacing: 0; }
.tT { font: bold 13px "Liberation Serif", serif; letter-spacing: 0; fill: #444; }
.tN { font: bold 10px "Liberation Sans", sans-serif; letter-spacing: 0; fill: #fff; }
.tD { font: bold 7.500px "Liberation Sans", sans-serif; letter-spacing: 0; fill: #555; }
.tA { font: bold 8px "Liberation Sans", sans-serif; letter-spacing: 0; }
.pagebox, .zoombox { display: flex; border: 1px solid #96938d; border-radius: 3px; overflow: hidden; }
.pagebox { width: 66px; height: 30px; margin: 0 .5px; color: #777; }
.pagebox span { flex: 1; padding: 8px 0 0 4px; }
.pagebox em, .zoombox em { width: 20px; border-left: 1px solid #96938d; background: linear-gradient(#f6f5f2, #d6d3cd); display: grid; place-items: center; }
.pagebox em::after, .zoombox em::after, .combo em::after { content: ""; border: 4px solid transparent; border-top-color: #55534f; border-bottom: 0; }
.pagebox em::after { border-top-color: #8a8883; }

.main { height: 900px; flex: none; display: flex; }
.toolbox { width: 40px; flex: none; background: linear-gradient(90deg, #dedad2, #cfcbc3); border-right: 1px solid #a09d97; display: flex; flex-direction: column; align-items: center; padding-top: 5px; }
.hgrip { width: 18px; height: 5px; margin-bottom: 2px; background: radial-gradient(circle, #f4f3ef 0 .9px, #b5b2aa 1px 1.200px, transparent 1.300px) 0 0 / 3px 3px; }
.toolbox .ic { width: 22px; height: 22px; margin: 5.060px 0; overflow: visible; }
.toolbox .cell { width: 32px; height: 32px; padding-left: 4px; border: 1px solid #96938d; border-radius: 3px; background: #bab7b0; }
.toolbox .cell .ic { margin: 4px 0; }

.view { width: 767px; flex: none; display: flex; flex-direction: column; }
.hruler, .vruler { display: block; }
.hruler text, .vruler text { font-size: 10.500px; letter-spacing: -.4px; fill: #333; }
.viewrow { display: flex; height: 880px; }
.canvas { background: #d8d8d8; display: block; }
.land { fill: #997db5; stroke: #5b4a6a; stroke-width: 2.800; }
.lines { fill: none; stroke: #35243f; stroke-width: 2.800; }
.handles { fill: #fff; stroke: #4a86c0; }
.scroll { width: 13px; display: flex; flex-direction: column; background: #cbc8c2; border-left: 1px solid #a9a69f; }
.scroll .up, .scroll .down { height: 13px; background: #e6e3dd; display: grid; place-items: center; }
.scroll .up { border-bottom: 1px solid #a9a69f; }
.scroll .down { border-top: 1px solid #a9a69f; }
.scroll .up::after, .scroll .down::after { content: ""; border: 4px solid transparent; }
.scroll .up::after { border-bottom-color: #444; border-top: 0; }
.scroll .down::after { border-top-color: #444; border-bottom: 0; }
.scroll .space1 { height: 26px; }
.scroll .thumb { flex: 1; border: solid #a9a69f; border-width: 1px 0; background: linear-gradient(90deg, #ebe8e2, #d6d2ca); }
.scroll .space2 { height: 13px; }

.side { flex: 1; min-width: 0; margin-left: 7px; display: flex; flex-direction: column; }
.tabs { height: 25px; display: flex; align-items: flex-end; border-bottom: 1px solid #a09d97; box-shadow: 0 1px #f2f0ec; }
.tab { height: 21px; display: flex; align-items: center; justify-content: center; background: #c6c3bb; border: 1px solid #a09d97; border-bottom: 0; border-radius: 3px 3px 0 0; border-left-width: 0; }
.tab.active { height: 24px; margin-bottom: -1px; background: #dad6ce; padding-bottom: 1px; border-left-width: 1px; }
.t1 { width: 51px; }
.t2 { width: 86px; }
.t3 { width: 57px; border-left-width: 1px; }
.t4 { width: 99px; }
.t5 { width: 55px; }
.tabs.lower .active { height: 23px; letter-spacing: -.15px; padding-right: 2px; }
.docktitle { height: 20px; display: flex; align-items: center; padding: 2px 2px 0 4px; font-weight: bold; letter-spacing: .05px; }
.dockbtns { margin-left: auto; display: flex; gap: 3px; }
.dockbtns svg { width: 11px; height: 11px; }
.tree { height: 118px; background: #fff; border: 1px solid #96938d; }
.thead { height: 20px; display: flex; background: linear-gradient(#e0ddd7, #cfccc5); border-bottom: 1px solid #a09d97; }
.c1 { width: 36px; display: flex; align-items: center; padding-left: 3px; }
.thead .c1 { border-right: 1px solid #b3b0a9; }
.c3 { display: flex; align-items: center; padding-left: 1px; }
.eyeg { width: 15px; height: 11px; --iris: #888; }
.lockg { width: 14px; height: 16px; }
.trow { display: flex; height: 18px; }
.item svg { width: 16px; height: 14px; margin: 1px 5px 0 3px; }
.item b { letter-spacing: 0; padding-bottom: 2px; }
.cb { width: 14px; height: 14px; flex: none; background: #fff; border: 1px solid #a3a19b; }
.cb.on { display: grid; place-items: center; }
.cb.on::after { content: ""; width: 4px; height: 8px; border: solid #000; border-width: 0 2px 2px 0; transform: translateY(-1px) rotate(35deg); }
.split { height: 5px; display: grid; place-items: center; }
.split i { width: 17px; height: 2px; background: repeating-linear-gradient(90deg, #aaa79f 0 1px, transparent 1px 3px); }
.itemname { height: 17px; margin-right: 1px; padding: 2px 5px; background: #c8c8c8; font-weight: bold; letter-spacing: 0; }
.docktitle.two { height: 21px; padding-top: 2px; }
.minibar { height: 30px; display: flex; align-items: center; padding: 0 0 2px 8px; }
.minibar svg { width: 16px; height: 16px; margin-right: 10px; overflow: visible; }
.minibar svg + i { margin-left: -3px; }
.minibar i { width: 1px; height: 13px; background: #b9b6af; box-shadow: 1px 0 #efede8; margin-right: 7px; }

.props { flex: 1; min-height: 0; display: flex; border: 1px solid #96938d; border-right: 0; margin-right: 0; }
.pcontent { width: 374px; flex: none; padding: 0 10px 0 12px; overflow: hidden; }
.pscroll { width: 14px; }
.pscroll .thumb { flex: none; height: 398px; border-top: 0; }
.pscroll .space2 { flex: 1; }
h3 { margin: 0; font-size: 11px; display: flex; align-items: center; letter-spacing: .05px; }
.h1 { height: 29px; padding-top: 9px; }
.h2 { height: 25px; padding-top: 5px; }
.h3 { height: 24px; padding-top: 4px; }
.tri { border: 5.500px solid transparent; border-top: 7px solid #3c3a3a; border-bottom: 0; margin: 2px 7px 0 1px; }
.group { border: 1px solid #c0bdb5; border-radius: 2px; padding: 9px 20px 0 12px; background: #d1cdc5; width: 351px; }
.g1 { height: 138px; padding-top: 10px; }
.g2 { height: 110px; }
.g3 { height: 148px; }
.row { display: flex; align-items: center; }
.r32 { height: 32px; }
.r31 { height: 31px; }
.r29 { height: 29px; }
.r26 { height: 26px; }
.row label { width: 35px; flex: none; white-space: nowrap; padding-top: 1px; }
.row .w80 { width: 67px; }
.input { flex: 1; height: 22px; background: #fff; border: 1px solid #96938d; border-radius: 3px; padding: 4px 3px 0; }
.spin { height: 20px; padding-top: 3px; display: flex; }
.spin em { margin: -3px -3px 0 auto; width: 14px; height: 18px; border-left: 1px solid #a3a19b; background: #dedbd5; display: flex; flex-direction: column; align-items: center; justify-content: center; gap: 3px; border-radius: 0 2px 2px 0; }
.spin em i { border: 3.500px solid transparent; border-bottom: 4px solid #55534f; border-top: 0; }
.spin em i + i { border-top: 4px solid #55534f; border-bottom: 0; }
.ov { width: 24px; height: 18px; margin: 0 -5px 0 9px; }
.combo { flex: none; height: 23px; border: 1px solid #96938d; border-radius: 3px; background: linear-gradient(#e9e6e1, #cfccc4); padding-left: 4px; display: flex; align-items: center; }
.combo em { margin-left: auto; padding-right: 6px; display: grid; }
.crs { width: 227px; }
.none { width: 141px; height: 22px; }
.btn { width: 24px; height: 24px; border: 1px solid #96938d; border-radius: 3px; background: linear-gradient(#f2f0ec, #d6d3cd); display: grid; place-items: center; }
.btn svg { width: 18px; height: 18px; }
.crsb { margin-left: 6px; flex: none; }
.cl { padding: 1px 0 0 4px; }
.grow { flex: 1; }
.off { color: #77746e; }
.off .cb { background: transparent; }
.fold { height: 25px; display: flex; align-items: center; font-weight: bold; letter-spacing: 0; }
.fold.f1 { height: 29px; }
.fold.f6 { height: 23px; }
.fold .cb { margin: -2px 7px 0 -1px; }
.rtri { border: 5.500px solid transparent; border-left: 7px solid #3c3a3a; border-right: 0; margin: 1px 9px 0 4px; }
.off .rtri { border-left-color: #a3a09a; }

.status { flex: 1; display: flex; align-items: center; padding: 1px 0 0 7px; }
.s1 { width: 640px; }
.s2 { width: 107px; }
.s3 { width: 105px; }
.s4 { width: 107px; }
.zoombox { width: 108px; height: 22px; }
.zoombox span { flex: 1; background: #fff; padding: 4px 3px; }
.slider { width: 98px; height: 5px; margin-left: 7px; border: 1px solid #a3a19b; border-radius: 2px; background: #c3c0b9; display: flex; align-items: center; }
.slider i { width: 6px; height: 5px; background: #1c3c8c; flex: none; }
.slider b { width: 13px; height: 13px; border: 1px solid #96938d; border-radius: 3px; background: #efedea; flex: none; }
.sizegrip { width: 12px; height: 12px; margin: 14px 0 0 12px; }

.notes { position: absolute; left: 0; top: 0; pointer-events: none; }
.nums { font: bold 27px "DejaVu Sans", sans-serif; font-stretch: normal; letter-spacing: 0; fill: #fd8030; }
```

FILE: rulers.js
```js
// Draws the millimetre rulers: 2.895 px per mm, a tick every 2 mm, a label every 20 mm.
const STEP = 2.895;
const NS = 'http://www.w3.org/2000/svg';

function add(parent, name, attrs, text) {
  const el = document.createElementNS(NS, name);
  for (const key in attrs) el.setAttribute(key, attrs[key]);
  if (text !== undefined) el.textContent = text;
  parent.appendChild(el);
}

const h = document.getElementById('hruler');
for (let mm = -20; mm <= 236; mm += 2) {
  const x = Math.floor(81.5 + mm * STEP) + 0.5;
  const len = mm % 20 === 0 ? 19 : mm % 10 === 0 ? 7 : 4;
  add(h, 'path', { d: `M${x} 19v-${len}`, stroke: '#222' });
  if (mm % 20 === 0) add(h, 'text', { x: x + 0.5, y: 11 }, mm);
}
add(h, 'path', { d: 'M726.500 0v19', stroke: '#e02020' });

const v = document.getElementById('vruler');
for (let mm = 0; mm <= 302; mm += 2) {
  const y = Math.floor(4.5 + mm * STEP) + 0.5;
  const len = mm % 20 === 0 ? 19 : mm % 10 === 0 ? 7 : 4;
  add(v, 'path', { d: `M19 ${y}h-${len}`, stroke: '#222' });
  if (mm % 20 === 0) {
    add(v, 'text', { transform: `translate(11 ${y + 3.5}) rotate(-90)`, 'text-anchor': 'end' }, mm);
  }
}
add(v, 'path', { d: 'M0 670.500h19', stroke: '#e02020' });
```
